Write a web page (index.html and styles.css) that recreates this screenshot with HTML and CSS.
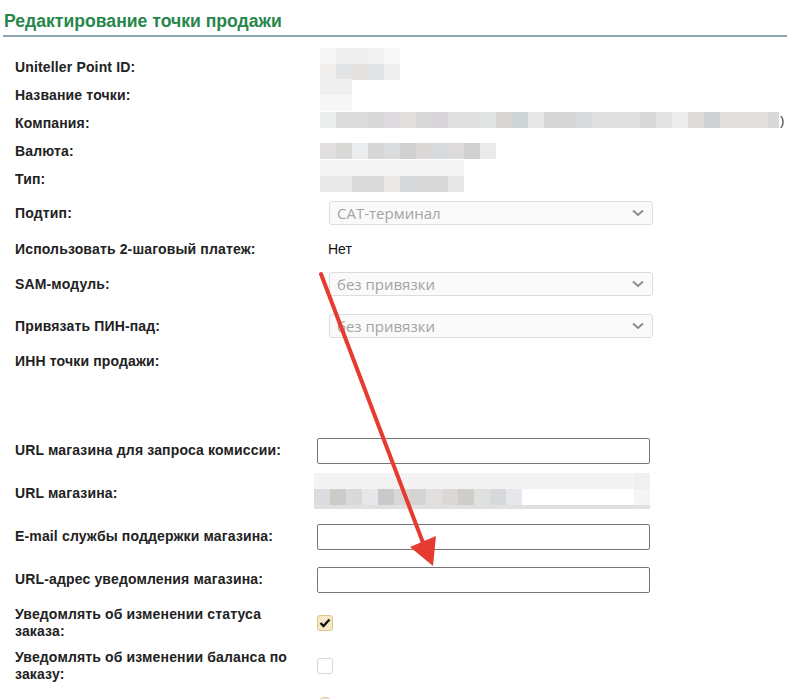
FILE: index.html
```html
<!DOCTYPE html>
<html lang="ru">
<head>
    <meta charset="UTF-8">
    <meta name="viewport" content="width=device-width, initial-scale=1.0">
    <title>Редактирование точки продажи</title>
    <link rel="stylesheet" href="styles.css">
</head>
<body>
    <div class="page">
        <h1 class="title">Редактирование точки продажи</h1>

        <div class="form">
            <div class="row row-info">
                <div class="label">Uniteller Point ID:</div>
                <div class="value"><div class="blur blur-id"></div></div>
            </div>
            <div class="row row-info">
                <div class="label">Название точки:</div>
                <div class="value"><div class="blur blur-name"></div></div>
            </div>
            <div class="row row-info">
                <div class="label">Компания:</div>
                <div class="value"><div class="blur blur-company"></div><span class="paren">)</span></div>
            </div>
            <div class="row row-info">
                <div class="label">Валюта:</div>
                <div class="value"><div class="blur blur-currency"></div></div>
            </div>
            <div class="row row-info">
                <div class="label">Тип:</div>
                <div class="value"><div class="blur blur-type"></div></div>
            </div>

            <div class="row row-subtype">
                <div class="label">Подтип:</div>
                <div class="value">
                    <div class="select">
                        <span>CAT-терминал</span>
                        <svg class="chevron" width="12" height="8" viewBox="0 0 12 8"><polyline points="1,1.5 6,6 11,1.5" fill="none" stroke="#888" stroke-width="1.8"/></svg>
                    </div>
                </div>
            </div>
            <div class="row row-twostep">
                <div class="label">Использовать 2-шаговый платеж:</div>
                <div class="value"><span class="plain">Нет</span></div>
            </div>
            <div class="row row-sam">
                <div class="label">SAM-модуль:</div>
                <div class="value">
                    <div class="select">
                        <span>без привязки</span>
                        <svg class="chevron" width="12" height="8" viewBox="0 0 12 8"><polyline points="1,1.5 6,6 11,1.5" fill="none" stroke="#888" stroke-width="1.8"/></svg>
                    </div>
                </div>
            </div>
            <div class="row row-pinpad">
                <div class="label">Привязать ПИН-пад:</div>
                <div class="value">
                    <div class="select">
                        <span>без привязки</span>
                        <svg class="chevron" width="12" height="8" viewBox="0 0 12 8"><polyline points="1,1.5 6,6 11,1.5" fill="none" stroke="#888" stroke-width="1.8"/></svg>
                    </div>
                </div>
            </div>
            <div class="row row-inn">
                <div class="label">ИНН точки продажи:</div>
                <div class="value"></div>
            </div>

            <div class="row row-field">
                <div class="label">URL магазина для запроса комиссии:</div>
                <div class="value"><input class="text-input" type="text"></div>
            </div>
            <div class="row row-field">
                <div class="label">URL магазина:</div>
                <div class="value"><div class="blur blur-url"></div></div>
            </div>
            <div class="row row-field">
                <div class="label">E-mail службы поддержки магазина:</div>
                <div class="value"><input class="text-input" type="text"></div>
            </div>
            <div class="row row-field">
                <div class="label">URL-адрес уведомления магазина:</div>
                <div class="value"><input class="text-input" type="text"></div>
            </div>

            <div class="row row-field">
                <div class="label">Уведомлять об изменении статуса заказа:</div>
                <div class="value">
                    <span class="check checked">
                        <svg width="12" height="10" viewBox="0 0 12 10"><polyline points="1.5,5 4.5,8 10.5,1.5" fill="none" stroke="#111" stroke-width="2.4"/></svg>
                    </span>
                </div>
            </div>
            <div class="row row-field">
                <div class="label">Уведомлять об изменении баланса по заказу:</div>
                <div class="value"><span class="check"></span></div>
            </div>
            <div class="row row-field">
                <div class="label"></div>
                <div class="value"><span class="radio"></span></div>
            </div>
        </div>

        <!-- annotation arrow drawn over the form -->
        <svg class="arrow" width="787" height="699" viewBox="0 0 787 699">
            <line x1="321" y1="274" x2="425" y2="548" stroke="#e53b30" stroke-width="4" stroke-linecap="round"/>
            <polygon points="433,566 410,547 436,536" fill="#e53b30"/>
        </svg>
    </div>
</body>
</html>
```

FILE: styles.css
```css
body {
    margin: 0;
    padding: 0;
    background-color: #fff;
    font-family: 'Liberation Sans', Arial, sans-serif;
    color: #222;
}

.page {
    position: relative;
    width: 787px;
    height: 699px;
    overflow: hidden;
}

.title {
    margin: 0 0 0 3px;
    padding: 11px 0 4px 1px;
    font-size: 17.6px;
    line-height: 20px;
    font-weight: bold;
    color: #26864b;
    border-bottom: 2px solid #8ca6b2;
}

.form {
    padding: 16px 0 0 15px;
}

.row {
    display: flex;
    align-items: center;
}

.label {
    flex: 0 0 285px;
    margin-right: 17px;
    font-size: 14px;
    line-height: 17px;
    letter-spacing: 0.15px;
    font-weight: bold;
    color: #222;
}

.value {
    display: flex;
    align-items: center;
    flex: 1;
}

.row-info { height: 28px; }
.row-subtype { height: 40px; }
.row-twostep { height: 32px; }
.row-sam { height: 38px; }
.row-pinpad { height: 46px; }
.row-field { height: 43px; }

.row-inn {
    height: 80px;
    align-items: flex-start;
}

.row-inn .label {
    padding-top: 4px;
}

/* pixelated (hidden) values */
.blur {
    margin-left: 3px;
}

.blur-id {
    width: 80px;
    height: 32px;
    margin-top: -6px;
    background:
        linear-gradient(90deg, #f6f6f6 0 16px, #efefef 16px 48px, #f1f2f1 48px 64px, #f8f8f8 64px 80px) top / 80px 16px no-repeat,
        linear-gradient(90deg, #efeeed 0 16px, #e2e3e5 16px 32px, #e4e2e1 32px 48px, #e2e3e4 48px 64px, #efeff0 64px 80px) bottom / 80px 16px no-repeat;
}

.blur-name {
    width: 32px;
    height: 32px;
    background: linear-gradient(180deg, #efefef 0 16px, #f7f7f7 16px 32px);
}

.blur-company {
    width: 459px;
    height: 16px;
    margin-top: -6px;
    background: linear-gradient(90deg,
        #eceeee 0 16px, #dcdcdc 16px 48px, #d9d9d9 48px 64px, #dcdadc 64px 80px, #e1e0de 80px 96px,
        #d9d9da 96px 112px, #d8d6d9 112px 128px, #e0e0e0 128px 160px, #e3e5e5 160px 176px, #d9d7d4 176px 192px,
        #ced4d6 192px 208px, #e8e8e8 208px 224px, #d6d6d7 224px 256px, #d9dadb 256px 272px, #e0e0e0 272px 320px,
        #d9d9d9 320px 336px, #e3e3e3 336px 352px, #ececec 352px 368px, #dcdbd8 368px 384px, #cfd0d4 384px 400px,
        #e2e0df 400px 448px, #d9d9d9 448px 459px);
}

.paren {
    margin-left: 1px;
    margin-top: -6px;
    font-size: 13px;
    color: #333;
}

.blur-currency {
    width: 176px;
    height: 16px;
    background: linear-gradient(90deg,
        #e1dfe0 0 16px, #d8d8d6 16px 32px, #ebecee 32px 48px, #d6d6d7 48px 64px, #dbdcde 64px 80px,
        #d0d0d0 80px 96px, #dcd8d8 96px 112px, #d7dbde 112px 128px, #dcdadb 128px 144px, #d1d0d1 144px 160px,
        #eaebea 160px 176px);
}

.blur-type {
    width: 144px;
    height: 32px;
    margin-top: -6px;
    background:
        linear-gradient(90deg, #f4f4f4 0 144px) top / 144px 16px no-repeat,
        linear-gradient(90deg, #e9e9e9 0 32px, #d9dad9 32px 64px, #ebe9e8 64px 80px, #d8d9dd 80px 96px, #d9d8d9 96px 128px, #e6e7e6 128px 144px) bottom / 144px 16px no-repeat;
}

.blur-url {
    width: 336px;
    height: 36px;
    margin-left: -3px;
    margin-top: -6px;
    background:
        linear-gradient(90deg, #f3f3f3 0 320px, #f0f0f0 320px 336px) top / 336px 16px no-repeat,
        linear-gradient(90deg,
            #dcdce0 0 16px, #cbcbc9 16px 32px, #d9d9d9 32px 48px, #e6e7e8 48px 64px, #c9c9cb 64px 80px,
            #d6d7d6 80px 96px, #d4d4d4 96px 112px, #e1e0df 112px 128px, #ddd6d7 128px 144px, #cfcdca 144px 160px,
            #dfe1de 160px 176px, #d7d8da 176px 192px, #e5e7ea 192px 208px, #fff 208px 320px, #f5f5f5 320px 336px) 0 16px / 336px 16px no-repeat,
        linear-gradient(90deg, #e0e0e0 0 336px) bottom / 336px 4px no-repeat;
}

/* controls */
.select {
    display: flex;
    align-items: center;
    justify-content: space-between;
    box-sizing: border-box;
    width: 324px;
    height: 24px;
    margin-left: 12px;
    padding: 0 8px 0 7px;
    border: 1px solid #dddddd;
    border-radius: 3px;
    background-color: #fafafa;
    font-family: 'Open Sans', sans-serif;
    font-size: 15px;
    color: #a3a3a3;
}

.plain {
    margin-left: 11px;
    font-size: 14px;
    color: #111;
}

.text-input {
    box-sizing: border-box;
    width: 333px;
    height: 26px;
    margin: 0;
    border: 1px solid #777;
    border-radius: 2px;
    background-color: #fff;
}

.check {
    display: flex;
    align-items: center;
    justify-content: center;
    box-sizing: border-box;
    width: 16px;
    height: 16px;
    border: 1px solid #d6d6d6;
    border-radius: 3px;
    background-color: #fff;
}

.check.checked {
    border-color: #dcc690;
    background-color: #f8e9c6;
}

.radio {
    box-sizing: border-box;
    width: 16px;
    height: 16px;
    margin-bottom: 7px;
    border: 1px solid #dcc690;
    border-radius: 50%;
    background-color: #f8e9c6;
}

.arrow {
    position: absolute;
    top: 0;
    left: 0;
    pointer-events: none;
}
```
